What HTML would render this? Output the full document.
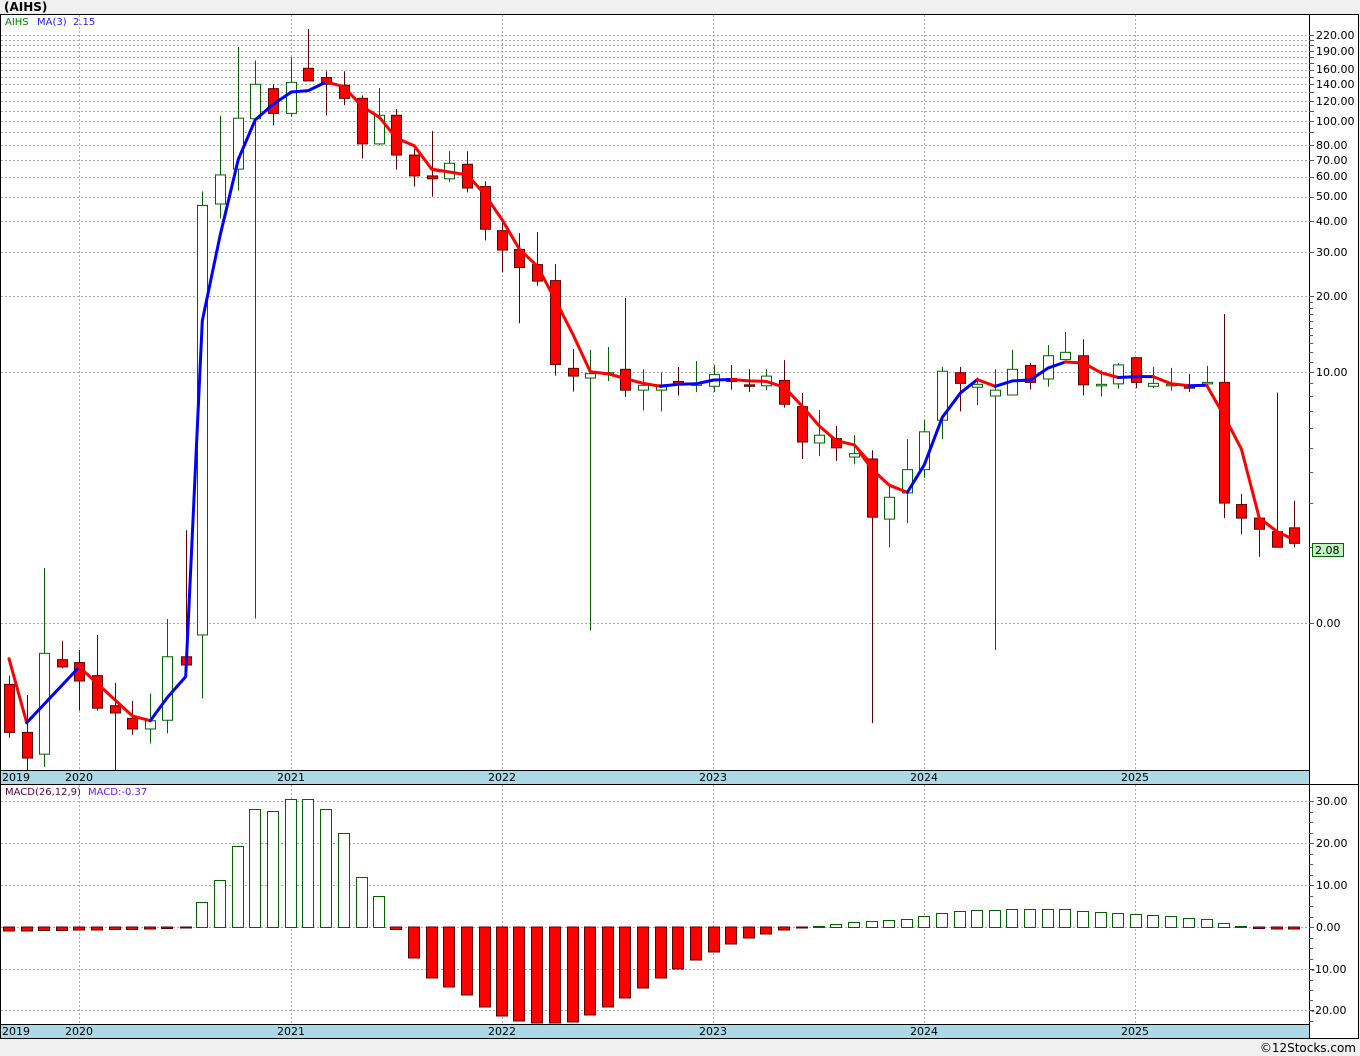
<!DOCTYPE html>
<html><head><meta charset="utf-8"><style>
html,body{margin:0;padding:0;background:#f0f0f0;width:1360px;height:1056px;overflow:hidden}
svg{display:block}
text{font-family:"DejaVu Sans","Liberation Sans",sans-serif;font-size:11px}
</style></head><body>
<svg id="s" width="1360" height="1056" xmlns="http://www.w3.org/2000/svg">
<rect x="0" y="0" width="1360" height="1056" fill="#f0f0f0"/>
<rect x="0.5" y="14.5" width="1358" height="1024" fill="#fff" stroke="#000"/>
<g id="grid" stroke="#aaa" stroke-dasharray="2,2" stroke-width="1"></g>
<rect x="1" y="770" width="1308" height="14" fill="#add8e6"/>
<rect x="1" y="1024" width="1308" height="14" fill="#add8e6"/>
<line x1="0" y1="770.5" x2="1309" y2="770.5" stroke="#000"/>
<line x1="0" y1="784.5" x2="1359" y2="784.5" stroke="#000"/>
<line x1="0" y1="1024.5" x2="1309" y2="1024.5" stroke="#000"/>
<line x1="1309.5" y1="14" x2="1309.5" y2="1038" stroke="#000"/>
<g id="ticks" stroke="#555"></g>
<g id="macd"></g>
<g id="candles"></g>
<g id="ma" fill="none" stroke-width="3" stroke-linejoin="round" stroke-linecap="round"></g>
<text x="4" y="11" style="font-weight:bold;font-size:12px">(AIHS)</text>
<text x="5" y="25" fill="#008000" style="font-size:10px">AIHS</text>
<text x="37" y="25" fill="#2020ff" style="font-size:10px">MA(3)</text>
<text x="73" y="25" fill="#2020ff" style="font-size:10px">2.15</text>
<text x="5" y="795" fill="#600030" style="font-size:10px">MACD(26,12,9)</text>
<text x="88" y="795" fill="#6020ff" style="font-size:10px">MACD:-0.37</text>
<g fill="#000">
<text x="2" y="781">2019</text><text x="65" y="781">2020</text><text x="277" y="781">2021</text><text x="488" y="781">2022</text><text x="699" y="781">2023</text><text x="910" y="781">2024</text><text x="1121" y="781">2025</text>
<text x="2" y="1035">2019</text><text x="65" y="1035">2020</text><text x="277" y="1035">2021</text><text x="488" y="1035">2022</text><text x="699" y="1035">2023</text><text x="910" y="1035">2024</text><text x="1121" y="1035">2025</text>
</g>
<g fill="#000" id="axl">
<text x="1316" y="39">220.00</text><text x="1316" y="55">190.00</text><text x="1316" y="73">160.00</text><text x="1316" y="88">140.00</text><text x="1316" y="105">120.00</text><text x="1316" y="125">100.00</text>
<text x="1316" y="149">80.00</text><text x="1316" y="164">70.00</text><text x="1316" y="180">60.00</text><text x="1316" y="200">50.00</text><text x="1316" y="225">40.00</text><text x="1316" y="256">30.00</text><text x="1316" y="300">20.00</text><text x="1316" y="376">10.00</text><text x="1316" y="627">0.00</text>
<text x="1316" y="805">30.00</text><text x="1316" y="847">20.00</text><text x="1316" y="889">10.00</text><text x="1316" y="931">0.00</text><text x="1311" y="973">-10.00</text><text x="1311" y="1014">-20.00</text>
</g>
<rect x="1312.5" y="543.5" width="31" height="13" fill="#c0f5c0" stroke="#006400"/>
<text x="1315" y="554" fill="#000">2.08</text>
<text x="1356" y="1052" text-anchor="end" fill="#000" style="font-size:12px">©12Stocks.com</text>
</svg>
<script>
const NS="http://www.w3.org/2000/svg";
function el(p,t,a){const e=document.createElementNS(NS,t);for(const k in a)e.setAttribute(k,a[k]);p.appendChild(e);return e;}
const grid=document.getElementById('grid'),ticks=document.getElementById('ticks');
const py=p=>372-251*Math.log10(p/10);
const prices=[220,210,200,190,180,170,160,150,140,130,120,110,100,90,80,70,60,50,40,30,20,10,1];
prices.forEach(p=>{const y=Math.round(py(p))+0.5;el(grid,'line',{x1:1,y1:y,x2:1309,y2:y});el(ticks,'line',{x1:1309,y1:y,x2:1314,y2:y});});
[2,3,4,5,6,7,8,9,11,12,13,14,15,16,17,18,19].forEach(p=>{const y=Math.round(py(p))+0.5;el(ticks,'line',{x1:1309,y1:y,x2:1313,y2:y});});
[801,843,885,927,969,1010].forEach(y=>{el(grid,'line',{x1:1,y1:y+0.5,x2:1309,y2:y+0.5});el(ticks,'line',{x1:1309,y1:y+0.5,x2:1314,y2:y+0.5});});
[812,822,833,854,864,875,896,906,917,938,948,959,980,990,1000,1021].forEach(y=>el(ticks,'line',{x1:1309,y1:y+0.5,x2:1313,y2:y+0.5}));
[79,291,502,713,924,1135].forEach(x=>{el(grid,'line',{x1:x+0.5,y1:15,x2:x+0.5,y2:770});el(grid,'line',{x1:x+0.5,y1:785,x2:x+0.5,y2:1024});});
const C=[
[0,[[27,1365,1493,1383,1482,1],[80,1405,1560,1482,1535,1],[133,1143,1553,1319,1527,0],[187,1293,1350,1332,1347,1],[238,1312,1437,1338,1376,1],[292,1281,1437,1365,1432,1],[344,1380,1560,1427,1442,1],[397,1417,1487,1453,1475,1],[451,1402,1505,1458,1475,0],[502,1248,1484,1326,1457,0],[557,1065,1343,1326,1343,1],[607,366,1412,395,1281,0],[661,210,422,332,392,0],[715,68,364,215,320,0],[766,96,1247,145,216,0],[820,145,230,154,205,1],[874,89,212,141,205,0],[925,31,138,112,138,1],[979,118,209,131,145,1],[1031,118,188,147,174,1],[1085,168,298,174,268,1],[1138,153,270,209,268,0],[1189,196,321,209,291,1],[1243,278,356,291,334,1],[1295,241,377,334,340,1]]],
[430,[[58,283,347,308,340,0],[112,283,368,310,359,1],[164,345,467,356,444,1],[217,430,533,447,487,1],[268,452,638,486,523,1],[322,450,561,517,551,1],[376,516,746,550,723,1],[428,691,779,731,747,1],[481,693,1272,742,751,0],[533,687,757,740,744,0],[586,586,790,733,776,1],[640,733,818,766,776,0],[692,740,820,765,776,0],[745,728,787,758,765,1],[799,716,780,763,766,0],[851,724,780,744,768,0],[904,724,775,752,758,1],[956,733,780,765,768,1],[1009,733,776,747,767,0],[1063,714,812,756,805,1],[1115,782,918,810,883,1],[1168,817,912,869,885,0],[1219,850,922,876,895,1],[1273,869,929,907,914,0]]],
[860,[[37,900,1463,918,1038,1],[88,975,1100,997,1042,0],[142,877,1050,940,988,0],[193,838,957,862,940,0],[247,728,877,737,838,0],[301,728,820,740,762,1],[352,750,807,764,770,0],[406,733,1312,776,788,0],[457,693,787,733,786,0],[511,720,775,725,760,1],[565,683,769,705,753,0],[616,656,713,698,713,0],[670,671,787,705,765,1],[723,735,789,764,766,0],[775,720,773,724,763,0],[829,708,772,709,760,1],[880,728,772,762,768,0],[934,730,777,764,766,0],[988,743,780,766,772,1],[1040,726,770,760,762,0],[1093,619,1040,760,1009,1],[1144,990,1073,1012,1040,1],[1198,1040,1120,1040,1063,1],[1252,781,1100,1068,1100,1],[1303,1004,1100,1060,1092,1]]]];
const cg=document.getElementById('candles');const Y=z=>14+z/2.063;
C.forEach(([ox,arr])=>arr.forEach(([zx,h,l,t,b,r])=>{
 const x=Math.round(ox+zx/3);const wc=r?'#600000':'#006400';
 el(cg,'line',{x1:x+0.5,y1:Y(h),x2:x+0.5,y2:Y(l),stroke:wc,'stroke-width':1});
 let y1=Y(t),y2=Y(b);if(y2-y1<1.5){y2=y1+1.5;}
 el(cg,'rect',{x:x-4.5,y:y1,width:10,height:y2-y1,fill:r?'#ff0000':'#fff',stroke:wc,'stroke-width':1});
}));
const M=[
[0,[[27,1330],[80,1462]],'#ff0000'],[0,[[80,1462],[238,1347]],'#0000ff'],[0,[[238,1347],[397,1448],[451,1458]],'#ff0000'],
[0,[[451,1458],[502,1410],[557,1367],[607,633],[661,455],[715,300],[766,218],[820,186],[874,161],[925,158],[979,140]],'#0000ff'],
[0,[[979,140],[1031,150],[1085,190],[1138,213],[1189,256],[1243,272],[1295,320],[1320,324]],'#ff0000'],
[430,[[5,320],[58,326],[112,332],[164,372],[217,425],[268,485],[322,520],[376,590],[428,660],[481,738],[533,742],[586,752],[640,762],[692,768]],'#ff0000'],
[430,[[692,768],[745,764],[799,763],[851,755],[904,754]],'#0000ff'],
[430,[[904,754],[956,757],[1009,758],[1063,770],[1115,808],[1168,850],[1219,880],[1273,889],[1320,925]],'#ff0000'],
[860,[[0,905],[37,940],[88,972],[142,987]],'#ff0000'],
[860,[[142,987],[193,930],[247,832],[301,782],[352,754]],'#0000ff'],
[860,[[352,754],[406,768]],'#ff0000'],
[860,[[406,768],[457,757],[511,755],[565,730],[616,718]],'#0000ff'],
[860,[[616,718],[670,720],[723,740],[775,750]],'#ff0000'],
[860,[[775,750],[829,748],[880,748]],'#0000ff'],
[860,[[880,748],[934,763],[988,767]],'#ff0000'],
[860,[[988,767],[1040,766]],'#0000ff'],
[860,[[1040,766],[1093,830],[1144,897],[1198,1040],[1252,1068],[1303,1085]],'#ff0000']];
const mg=document.getElementById('ma');
M.forEach(([ox,pts,c])=>el(mg,'polyline',{points:pts.map(([a,b])=>(ox+a/3).toFixed(1)+','+Y(b).toFixed(1)).join(' '),stroke:c}));
const xs=[];C.forEach(([ox,arr])=>arr.forEach(a=>xs.push(Math.round(ox+a[0]/3))));
const tops=[931,931,930.5,930.5,930,930,929.5,929.5,929,928.5,928,902,880,846,809,811,799,799,809,833,877,896,929.5,958,978,987,995,1007,1016,1021,1023,1023,1022,1015,1007,998,988,978,969,960,952,944,938,934,930,928,926,924,922,921,920,919,916,913,911,910,910,909,909,909,909,911,912,913,914,915,916,918,919,923,926,928.5,929,929];
const hg=document.getElementById('macd');
xs.forEach((x,i)=>{const v=tops[i];if(v===undefined)return;
 if(v<927){el(hg,'rect',{x:x-5.5,y:v+0.5,width:11,height:927-v,fill:'#fff',stroke:'#006400'});}
 else{const h=Math.max(v-927,1);el(hg,'rect',{x:x-5.5,y:927,width:11,height:h,fill:'#ff0000',stroke:'#600000'});}
});
</script>
</body></html>
